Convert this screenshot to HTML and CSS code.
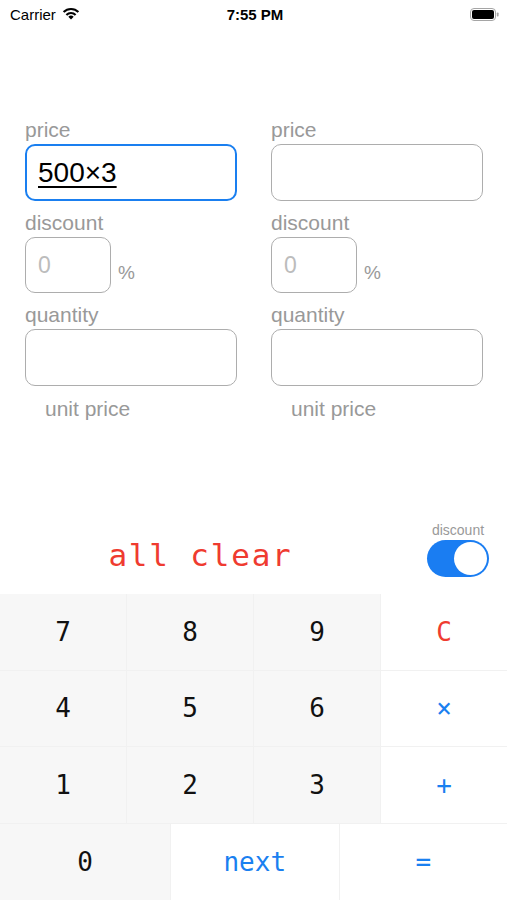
FILE: index.html
```html
<!DOCTYPE html>
<html lang="en">
<head>
  <meta charset="UTF-8" />
  <meta name="viewport" content="width=device-width, initial-scale=1.0"/>
  <title>Discount Calculator</title>
  <link rel="stylesheet" href="styles.css">
</head>
<body>

  <div class="screen">
    <div class="status-bar">
      <div class="status-left">
        <span>Carrier</span>
        <svg class="wifi" width="18" height="13" viewBox="0 0 18 13">
          <path d="M9 12.5 L6.3 9.8 A3.8 3.8 0 0 1 11.7 9.8 Z" fill="#000"/>
          <path d="M4.4 7.9 A6.4 6.4 0 0 1 13.6 7.9" stroke="#000" stroke-width="2.1" fill="none"/>
          <path d="M1.6 5.1 A10.4 10.4 0 0 1 16.4 5.1" stroke="#000" stroke-width="2.1" fill="none"/>
        </svg>
      </div>
      <div class="status-time">7:55 PM</div>
      <div class="status-right">
        <svg width="30" height="13" viewBox="0 0 30 13">
          <rect x="0.5" y="0.5" width="25" height="12" rx="3.5" fill="none" stroke="#a5a5a5"/>
          <rect x="2" y="2" width="22" height="9" rx="2" fill="#000"/>
          <rect x="26.8" y="4.5" width="1.8" height="4" rx="0.8" fill="#a5a5a5"/>
        </svg>
      </div>
    </div>

    <div class="form">
      <div class="column">
        <label class="field-label">price</label>
        <div class="field field-wide focused"><span class="entry">500×3</span></div>
        <label class="field-label spaced">discount</label>
        <div class="percent-row">
          <div class="field field-small"><span class="placeholder">0</span></div>
          <span class="percent">%</span>
        </div>
        <label class="field-label spaced">quantity</label>
        <div class="field field-wide"></div>
        <div class="unit-price">unit price</div>
      </div>

      <div class="column">
        <label class="field-label">price</label>
        <div class="field field-wide"></div>
        <label class="field-label spaced">discount</label>
        <div class="percent-row">
          <div class="field field-small"><span class="placeholder">0</span></div>
          <span class="percent">%</span>
        </div>
        <label class="field-label spaced">quantity</label>
        <div class="field field-wide"></div>
        <div class="unit-price">unit price</div>
      </div>
    </div>

    <div class="action-row">
      <div class="all-clear">all clear</div>
      <div class="toggle-box">
        <div class="toggle-label">discount</div>
        <div class="toggle"><div class="knob"></div></div>
      </div>
    </div>

    <div class="keypad">
      <div class="keys-top">
        <div class="key">7</div>
        <div class="key">8</div>
        <div class="key">9</div>
        <div class="key key-op key-red">C</div>
        <div class="key">4</div>
        <div class="key">5</div>
        <div class="key">6</div>
        <div class="key key-op">×</div>
        <div class="key">1</div>
        <div class="key">2</div>
        <div class="key">3</div>
        <div class="key key-op">+</div>
      </div>
      <div class="keys-bottom">
        <div class="key">0</div>
        <div class="key key-op">next</div>
        <div class="key key-op">=</div>
      </div>
    </div>
  </div>

</body>
</html>
```

FILE: styles.css
```css
body {
  margin: 0;
  padding: 0;
  background: #fff;
  font-family: 'Liberation Sans', Arial, sans-serif;
}

.screen {
  display: flex;
  flex-direction: column;
  height: 100vh;
}

/* status bar */
.status-bar {
  height: 28px;
  display: flex;
  align-items: center;
  justify-content: space-between;
  padding: 0 7px 0 10px;
  font-size: 15px;
  color: #000;
}

.status-left {
  display: flex;
  align-items: center;
  gap: 6px;
  width: 120px;
}

.wifi {
  margin-top: -2px;
}

.status-time {
  font-weight: bold;
}

.status-right {
  width: 120px;
  display: flex;
  justify-content: flex-end;
}

/* form */
.form {
  display: flex;
  gap: 34px;
  padding: 90px 0 0 25px;
}

.column {
  width: 212px;
  display: flex;
  flex-direction: column;
}

.field-label {
  font-size: 21px;
  line-height: 24px;
  color: #999;
  margin-bottom: 2px;
}

.field-label.spaced {
  margin-top: 10px;
}

.field {
  box-sizing: border-box;
  border: 1px solid #adadad;
  border-radius: 10px;
  display: flex;
  align-items: center;
  padding-left: 12px;
}

.field-wide {
  width: 212px;
  height: 57px;
}

.field-small {
  width: 86px;
  height: 56px;
}

.focused {
  border: 2px solid #1a7ff0;
  padding-left: 11px;
}

.entry {
  font-size: 28px;
  color: #000;
  text-decoration: underline;
  text-decoration-thickness: 2px;
  text-underline-offset: 4px;
}

.placeholder {
  font-size: 23px;
  color: #bcbcbc;
}

.percent-row {
  display: flex;
  align-items: flex-end;
  gap: 7px;
}

.percent {
  font-size: 19px;
  color: #999;
  margin-bottom: 9px;
}

.unit-price {
  font-size: 21px;
  line-height: 24px;
  color: #999;
  margin-top: 11px;
  padding-left: 20px;
}

/* all clear + switch */
.action-row {
  margin-top: auto;
  display: flex;
  align-items: flex-end;
  padding: 0 18px 17px 0;
}

.all-clear {
  flex: 1;
  text-align: center;
  margin: 0 26px 6px 0;
  font-family: 'DejaVu Sans Mono', monospace;
  font-size: 31px;
  line-height: 31px;
  letter-spacing: 1.8px;
  color: #ef3b30;
}

.toggle-box {
  width: 62px;
  display: flex;
  flex-direction: column;
  align-items: center;
}

.toggle-label {
  font-size: 14px;
  line-height: 16px;
  color: #999;
  margin-bottom: 2px;
}

.toggle {
  box-sizing: border-box;
  width: 62px;
  height: 37px;
  border-radius: 19px;
  background: #1a7df2;
  padding: 2px;
  display: flex;
  justify-content: flex-end;
}

.knob {
  width: 33px;
  height: 33px;
  border-radius: 50%;
  background: #fff;
}

/* keypad */
.keypad {
  height: 306px;
  display: flex;
  flex-direction: column;
  gap: 1px;
  background: #f1f1f1;
}

.keys-top {
  height: 229px;
  display: grid;
  grid-template-columns: repeat(4, 1fr);
  grid-template-rows: repeat(3, 1fr);
  gap: 1px;
}

.keys-bottom {
  flex: 1;
  display: grid;
  grid-template-columns: 170px 1fr 1fr;
  gap: 1px;
}

.key {
  background: #f7f7f7;
  display: flex;
  align-items: center;
  justify-content: center;
  font-family: 'DejaVu Sans Mono', monospace;
  font-size: 26px;
  color: #111;
}

.key-op {
  background: #fff;
  color: #1a80f0;
}

.key-red {
  color: #ef3b30;
}
```
